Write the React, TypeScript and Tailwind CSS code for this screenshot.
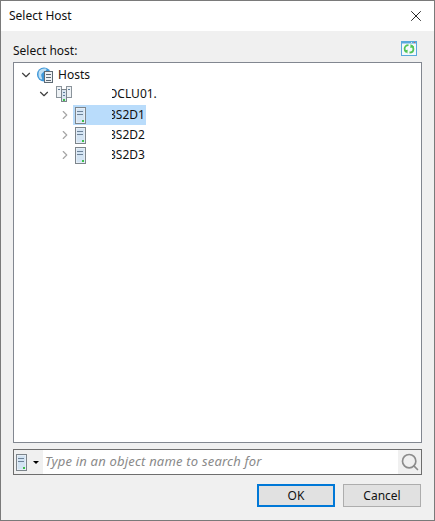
import { X, ChevronDown, ChevronRight, Search } from "lucide-react"

function ServerIcon() {
  return (
    <svg width="11" height="17" viewBox="0 0 11 17" className="shrink-0">
      <rect x="0.5" y="0.5" width="10" height="16" fill="#f4f7fa" stroke="#7d858b" strokeWidth="1" />
      <rect x="1.5" y="1.5" width="8" height="14" fill="#d3e4f3" />
      <rect x="2" y="4" width="6" height="1" fill="#6d8298" />
      <rect x="2" y="7" width="6" height="1" fill="#6d8298" />
      <rect x="7" y="13" width="2" height="2" fill="#3cc04a" />
    </svg>
  )
}

function ClusterIcon() {
  return (
    <svg width="16" height="16" viewBox="0 0 16 16" className="shrink-0">
      <rect x="0.5" y="0.5" width="5" height="11" fill="#eef2f5" stroke="#8b949b" />
      <rect x="10.5" y="0.5" width="5" height="11" fill="#eef2f5" stroke="#8b949b" />
      <rect x="5.5" y="3.5" width="5" height="12" fill="#dbe6ef" stroke="#7d858b" />
      <rect x="7" y="6" width="2" height="1" fill="#5f7f9c" />
      <rect x="7" y="9" width="2" height="1" fill="#5f7f9c" />
      <rect x="2" y="3" width="2" height="1" fill="#5f7f9c" />
      <rect x="12" y="3" width="2" height="1" fill="#5f7f9c" />
      <rect x="7" y="13" width="2" height="2" fill="#3cc04a" />
    </svg>
  )
}

function HostsIcon() {
  return (
    <svg width="16" height="16" viewBox="0 0 16 16" className="shrink-0">
      <circle cx="7" cy="7.5" r="7" fill="#3f97d8" />
      <path d="M2.5 3.5C4.5 1.5 7 1 9.5 1.8c.6 1-1 2.6-2.7 2.7-1 1.8-2.6 1.8-2.6 3.6s1 2.7 1 4.5C3.2 12.4 1.5 10.500 1.500 8c0-1.800 0-3.500 1-4.500z" fill="#bfe0f5" />
      <rect x="7.500" y="4.500" width="8" height="11" fill="#eef1f4" stroke="#5d6a74" />
      <rect x="9" y="7" width="5" height="1" fill="#5d6a74" />
      <rect x="9" y="10" width="5" height="1" fill="#5d6a74" />
      <rect x="9" y="13" width="5" height="1" fill="#5d6a74" />
    </svg>
  )
}

function RefreshIcon() {
  return (
    <svg width="16" height="15" viewBox="0 0 16 15">
      <rect x="0.5" y="0.5" width="15" height="14" fill="#f3f9fd" stroke="#58a8dc" />
      <rect x="1" y="1" width="14" height="1.5" fill="#58a8dc" />
      <rect x="10" y="1" width="1" height="1" fill="#d9e6ef" />
      <rect x="13" y="1" width="1" height="1" fill="#e2574c" />
      <path d="M7.500 4.200C4.800 4.200 3.600 6 3.600 7.800c0 1.400.6 2.500 1.600 3.100" fill="none" stroke="#52c455" strokeWidth="1.800" />
      <path d="M2.800 9.600l3.600 3 .3-3.900z" fill="#52c455" />
      <path d="M8.500 11.500c2.700 0 3.900-1.800 3.900-3.600 0-1.400-.6-2.500-1.600-3.100" fill="none" stroke="#52c455" strokeWidth="1.800" />
      <path d="M13.200 6.100l-3.600-3-.3 3.900z" fill="#52c455" />
    </svg>
  )
}

// names are cut off at the left in the picture, so the label clips its own first letter
function HostRow({ name, selected }: { name: string; selected?: boolean }) {
  return (
    <div className="flex h-5 items-center">
      <div className="flex w-[17px] justify-center">
        <ChevronRight size={14} strokeWidth={2} className="text-[#a6a6a6]" />
      </div>
      <div className={`flex h-5 w-[73px] items-center ${selected ? "bg-[#b9dcfb]" : ""}`}>
        <div className="ml-[2px] flex">
          <ServerIcon />
        </div>
        <div className="ml-[26px] overflow-hidden">
          <span className="-ml-[3px] block whitespace-nowrap">{name}</span>
        </div>
      </div>
    </div>
  )
}

export default function App() {
  return (
    <div
      className="flex h-[521px] w-[435px] flex-col border border-[#7a7a7a] bg-[#f0f0f0] text-[12px] text-[#111]"
      style={{ fontFamily: '"Noto Sans", "Open Sans", sans-serif' }}
    >
      {/* Title bar */}
      <div className="flex h-[30px] shrink-0 items-center justify-between bg-white pl-[8px] pr-[9px]">
        <span className="leading-none">Select Host</span>
        <X size={18} strokeWidth={1.2} className="text-[#111]" />
      </div>

      {/* Body */}
      <div className="flex min-h-0 flex-1 flex-col px-3">
        <div className="flex h-[31px] shrink-0 items-end justify-between pb-[3px] pr-[5px]">
          <span className="leading-4">Select host:</span>
          <div className="mb-[3px] flex">
            <RefreshIcon />
          </div>
        </div>

        {/* Tree */}
        <div className="h-[381px] shrink-0 border border-[#828790] bg-white pl-[5px] pt-[2px]">
          <div className="flex h-5 items-center">
            <ChevronDown size={14} strokeWidth={2} className="text-[#404040]" />
            <div className="ml-[4px] flex">
              <HostsIcon />
            </div>
            <span className="ml-[5px]">Hosts</span>
          </div>
          <div className="-mt-px flex h-5 items-center pl-[18px]">
            <ChevronDown size={14} strokeWidth={2} className="text-[#404040]" />
            <div className="ml-[5px] flex">
              <ClusterIcon />
            </div>
            <div className="ml-[40px] overflow-hidden">
              <span className="-ml-[4px] block whitespace-nowrap">OCLU01.</span>
            </div>
          </div>
          <div className="mt-px pl-[37px]">
            <HostRow name="3S2D1" selected />
            <HostRow name="3S2D2" />
            <HostRow name="3S2D3" />
          </div>
        </div>

        {/* Search */}
        <div className="mt-[6px] flex h-[26px] shrink-0 items-center border border-[#6e6e6e] bg-white">
          <div className="flex h-full w-[29px] items-center bg-[#f0f0f0] pl-[2px]">
            <ServerIcon />
            <span className="ml-[6px] h-0 w-0 border-x-[3px] border-t-[3px] border-x-transparent border-t-black" />
          </div>
          <span className="ml-[2px] flex-1 text-[13px] italic tracking-[0.2px] text-[#8a8a8a]">Type in an object name to search for</span>
          <div className="flex h-full w-[23px] items-center justify-center bg-[#f0f0f0]">
            <Search size={20} strokeWidth={2} className="text-[#8c8c8c]" />
          </div>
        </div>

        {/* Buttons */}
        <div className="mt-[9px] flex justify-end gap-2 pr-px">
          <button className="h-[23px] w-[78px] border-2 border-[#0078d7] bg-[#e1e1e1]">OK</button>
          <button className="h-[23px] w-[78px] border border-[#adadad] bg-[#e1e1e1]">Cancel</button>
        </div>
      </div>
    </div>
  )
}
